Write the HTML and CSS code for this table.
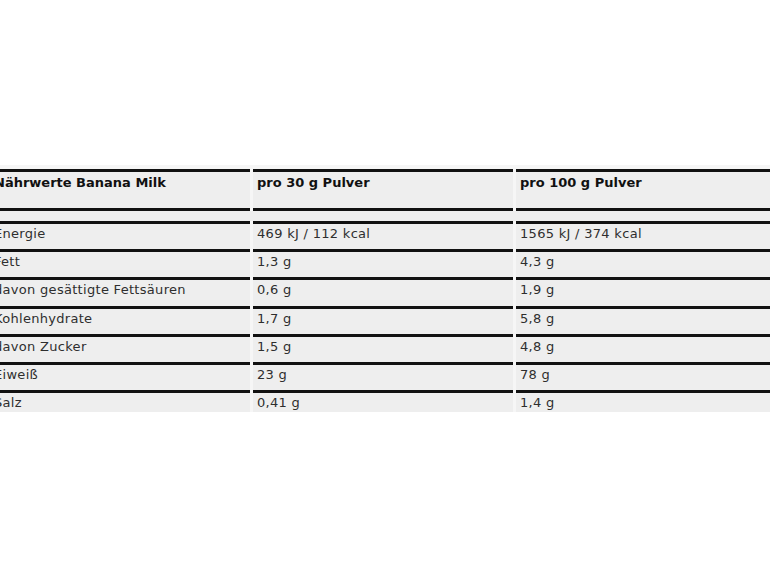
FILE: index.html
```html
<!DOCTYPE html>
<html lang="de">
<head>
<meta charset="utf-8">
<title>Nährwerte Banana Milk</title>
<link rel="stylesheet" href="styles.css">
</head>
<body>
<div class="frame">
  <table class="nutrition">
    <thead>
      <tr>
        <th>Nährwerte Banana Milk</th>
        <th>pro 30 g Pulver</th>
        <th>pro 100 g Pulver</th>
      </tr>
    </thead>
    <tbody>
      <tr class="spacer"><td colspan="3"></td></tr>
      <tr><td>Energie</td><td>469 kJ / 112 kcal</td><td>1565 kJ / 374 kcal</td></tr>
      <tr><td>Fett</td><td>1,3 g</td><td>4,3 g</td></tr>
      <tr><td>davon gesättigte Fettsäuren</td><td>0,6 g</td><td>1,9 g</td></tr>
      <tr><td>Kohlenhydrate</td><td>1,7 g</td><td>5,8 g</td></tr>
      <tr><td>davon Zucker</td><td>1,5 g</td><td>4,8 g</td></tr>
      <tr><td>Eiweiß</td><td>23 g</td><td>78 g</td></tr>
      <tr><td>Salz</td><td>0,41 g</td><td>1,4 g</td></tr>
    </tbody>
  </table>
</div>
</body>
</html>
```

FILE: styles.css
```css
html, body {
  margin: 0;
  padding: 0;
  background: #ffffff;
}

body {
  font-family: "DejaVu Sans", Verdana, sans-serif;
  font-size: 13px;
  line-height: 16px;
  letter-spacing: 0.3px;
  color: #2e2e2e;
}

.frame {
  margin-top: 165px;
  height: 247px;
  overflow: hidden;
  background: #f6f6f6;
}

.nutrition {
  margin-top: 4px;
  margin-left: -13px;
  border-collapse: separate;
  border-spacing: 3px 0;
  table-layout: fixed;
  width: 792px;
}

.nutrition th,
.nutrition td {
  box-sizing: border-box;
  width: 260px;
  text-align: left;
  vertical-align: top;
  background: #eeeeee;
  border-top: 3px solid #111111;
  padding: 2px 4px 7.2px;
}

.nutrition th {
  font-weight: bold;
  letter-spacing: 0;
  color: #111111;
  padding: 3px 4px 17px;
  border-bottom: 3px solid #111111;
}

.nutrition .spacer td {
  border-top: 0;
  padding: 0;
  height: 10px;
}
```
